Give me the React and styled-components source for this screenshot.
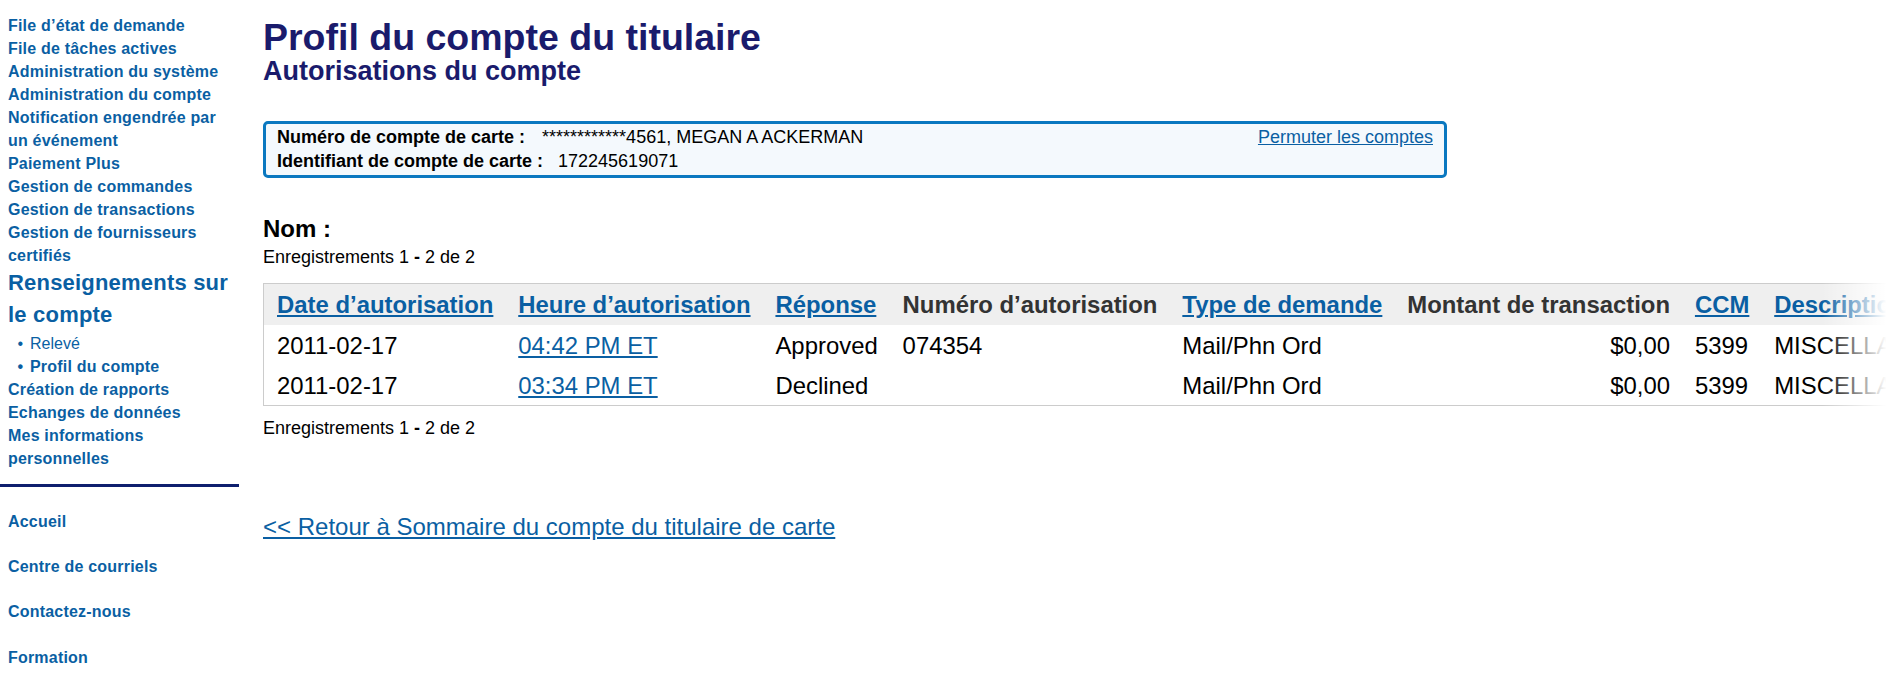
import React from 'react';
import styled, { createGlobalStyle, css } from 'styled-components';

const linkBlue = '#0a5fa3';
const navy = '#1a1b6c';

const GlobalStyle = createGlobalStyle`
  html, body {
    margin: 0;
    padding: 0;
    background: #ffffff;
  }
  body {
    font-family: "Liberation Sans", Arial, sans-serif;
    color: #000;
  }
`;

// --- Layout --- //
const Page = styled.div`
  display: flex;
  align-items: flex-start;
  width: 1895px;
  min-height: 688px;
`;

const Sidebar = styled.nav`
  flex: 0 0 240px;
  width: 240px;
  padding-top: 14px;
`;

const NavList = styled.div`
  display: flex;
  flex-direction: column;
  padding: 0 8px 0 8px;
`;

const NavLink = styled.a`
  display: block;
  color: ${linkBlue};
  font-size: 16px;
  line-height: 23px;
  font-weight: bold;
  letter-spacing: 0.2px;
  text-decoration: none;
  cursor: pointer;
`;

const SectionTitle = styled(NavLink)`
  font-size: 22px;
  line-height: 31.5px;
`;

const SubList = styled.div`
  display: flex;
  flex-direction: column;
  margin-top: 1.5px;
  padding-left: 9.5px;
`;

const SubLink = styled(NavLink)`
  font-weight: ${p => (p.$active ? 'bold' : 'normal')};
  letter-spacing: ${p => (p.$active ? '0.2px' : '0')};
`;

const Bullet = styled.span`
  display: inline-block;
  width: 12.5px;
`;

const Divider = styled.hr`
  margin: 14.5px 0 11.5px 0;
  width: 239px;
  height: 3px;
  border: none;
  background: #0e1f6e;
`;

const FooterLink = styled(NavLink)`
  padding: 11.2px 0;
`;

const Main = styled.main`
  flex: 1;
  min-width: 0;
  padding: 17px 0 0 23px;
`;

const Title = styled.h1`
  margin: 0;
  font-size: 37.5px;
  line-height: 40px;
  font-weight: bold;
  color: ${navy};
`;

const Subtitle = styled.h2`
  margin: 0;
  font-size: 27px;
  line-height: 28px;
  font-weight: bold;
  color: ${navy};
`;

// --- Account box --- //
const AccountBox = styled.div`
  margin-top: 36px;
  width: 1184px;
  box-sizing: border-box;
  border: 3px solid #0a78c0;
  border-radius: 5px;
  background: #f4f9fd;
  padding: 1px 11px 2px 11px;
`;

const AccountRow = styled.div`
  display: flex;
  align-items: baseline;
  font-size: 18px;
  line-height: 24px;
`;

const Label = styled.span`
  font-weight: bold;
`;

const Value = styled.span`
  margin-left: ${p => p.$gap || 17}px;
`;

const Spacer = styled.span`
  flex: 1;
`;

const TextLink = styled.a`
  color: ${linkBlue};
  text-decoration: underline;
  cursor: pointer;
`;

// --- Records --- //
const NameLabel = styled.div`
  margin-top: 37px;
  font-size: 24px;
  line-height: 27px;
  font-weight: bold;
`;

const Records = styled.div`
  margin-top: ${p => p.$top}px;
  font-size: 18px;
  line-height: 21px;
  b { font-weight: bold; }
`;

const TableWrap = styled.div`
  position: relative;
  margin-top: 15px;
  margin-right: 3px;
  overflow: hidden;

  &::after {
    content: '';
    position: absolute;
    top: 0;
    right: 0;
    bottom: 0;
    width: 70px;
    background: linear-gradient(to right, rgba(255,255,255,0), #ffffff 92%);
    pointer-events: none;
  }
`;

const Table = styled.table`
  border-collapse: collapse;
  border: 1px solid #cccccc;
  white-space: nowrap;
  font-size: 23.9px;
  line-height: 27px;
`;

const cellCss = css`
  padding: 0 12.45px;
  text-align: ${p => (p.$right ? 'right' : 'left')};
  vertical-align: baseline;

  &:first-child {
    padding-left: 13px;
  }
`;

const Th = styled.th`
  ${cellCss}
  padding-top: 7px;
  padding-bottom: 7px;
  background: #efefef;
  font-weight: bold;
  color: #333333;
`;

const HeadLink = styled.a`
  color: ${linkBlue};
  text-decoration: underline;
  cursor: pointer;
`;

const Td = styled.td`
  ${cellCss}
  padding-top: 6.5px;
  padding-bottom: 6.5px;
  color: #000;
`;

const BackLink = styled(TextLink)`
  display: inline-block;
  margin-top: 73.5px;
  font-size: 24px;
  line-height: 28px;
`;

const navItems = [
  'File d’état de demande',
  'File de tâches actives',
  'Administration du système',
  'Administration du compte',
  'Notification engendrée par un événement',
  'Paiement Plus',
  'Gestion de commandes',
  'Gestion de transactions',
  'Gestion de fournisseurs certifiés',
];

const navAfter = ['Création de rapports', 'Echanges de données', 'Mes informations personnelles'];
const footerItems = ['Accueil', 'Centre de courriels', 'Contactez-nous', 'Formation'];

const columns = [
  { label: 'Date d’autorisation', link: true },
  { label: 'Heure d’autorisation', link: true },
  { label: 'Réponse', link: true },
  { label: 'Numéro d’autorisation' },
  { label: 'Type de demande', link: true },
  { label: 'Montant de transaction', right: true },
  { label: 'CCM', link: true },
  { label: 'Description', link: true },
];

const rows = [
  { date: '2011-02-17', time: '04:42 PM ET', resp: 'Approved', auth: '074354', type: 'Mail/Phn Ord', amount: '$0,00', ccm: '5399', desc: 'MISCELLANEOUS' },
  { date: '2011-02-17', time: '03:34 PM ET', resp: 'Declined', auth: '', type: 'Mail/Phn Ord', amount: '$0,00', ccm: '5399', desc: 'MISCELLANEOUS' },
];

const RecordCount = ({ top }) => (
  <Records $top={top}>
    Enregistrements 1 <b>-</b> 2 de 2
  </Records>
);

export default function App() {
  return (
    <>
      <GlobalStyle />
      <Page>
        <Sidebar>
          <NavList>
            {navItems.map(item => (
              <NavLink key={item}>{item}</NavLink>
            ))}
            <SectionTitle>Renseignements sur le compte</SectionTitle>
            <SubList>
              <SubLink><Bullet>•</Bullet>Relevé</SubLink>
              <SubLink $active><Bullet>•</Bullet>Profil du compte</SubLink>
            </SubList>
            {navAfter.map(item => (
              <NavLink key={item}>{item}</NavLink>
            ))}
          </NavList>
          <Divider />
          <NavList>
            {footerItems.map(item => (
              <FooterLink key={item}>{item}</FooterLink>
            ))}
          </NavList>
        </Sidebar>

        <Main>
          <Title>Profil du compte du titulaire</Title>
          <Subtitle>Autorisations du compte</Subtitle>

          <AccountBox>
            <AccountRow>
              <Label>Numéro de compte de carte :</Label>
              <Value $gap={17}>************4561, MEGAN A ACKERMAN</Value>
              <Spacer />
              <TextLink>Permuter les comptes</TextLink>
            </AccountRow>
            <AccountRow>
              <Label>Identifiant de compte de carte :</Label>
              <Value $gap={15}>172245619071</Value>
            </AccountRow>
          </AccountBox>

          <NameLabel>Nom :</NameLabel>
          <RecordCount top={5} />

          <TableWrap>
            <Table>
              <thead>
                <tr>
                  {columns.map(col => (
                    <Th key={col.label} $right={col.right}>
                      {col.link ? <HeadLink>{col.label}</HeadLink> : col.label}
                    </Th>
                  ))}
                </tr>
              </thead>
              <tbody>
                {rows.map(row => (
                  <tr key={row.time}>
                    <Td>{row.date}</Td>
                    <Td><TextLink>{row.time}</TextLink></Td>
                    <Td>{row.resp}</Td>
                    <Td>{row.auth}</Td>
                    <Td>{row.type}</Td>
                    <Td $right>{row.amount}</Td>
                    <Td>{row.ccm}</Td>
                    <Td>{row.desc}</Td>
                  </tr>
                ))}
              </tbody>
            </Table>
          </TableWrap>

          <RecordCount top={12} />

          <BackLink>&lt;&lt; Retour à Sommaire du compte du titulaire de carte</BackLink>
        </Main>
      </Page>
    </>
  );
}
